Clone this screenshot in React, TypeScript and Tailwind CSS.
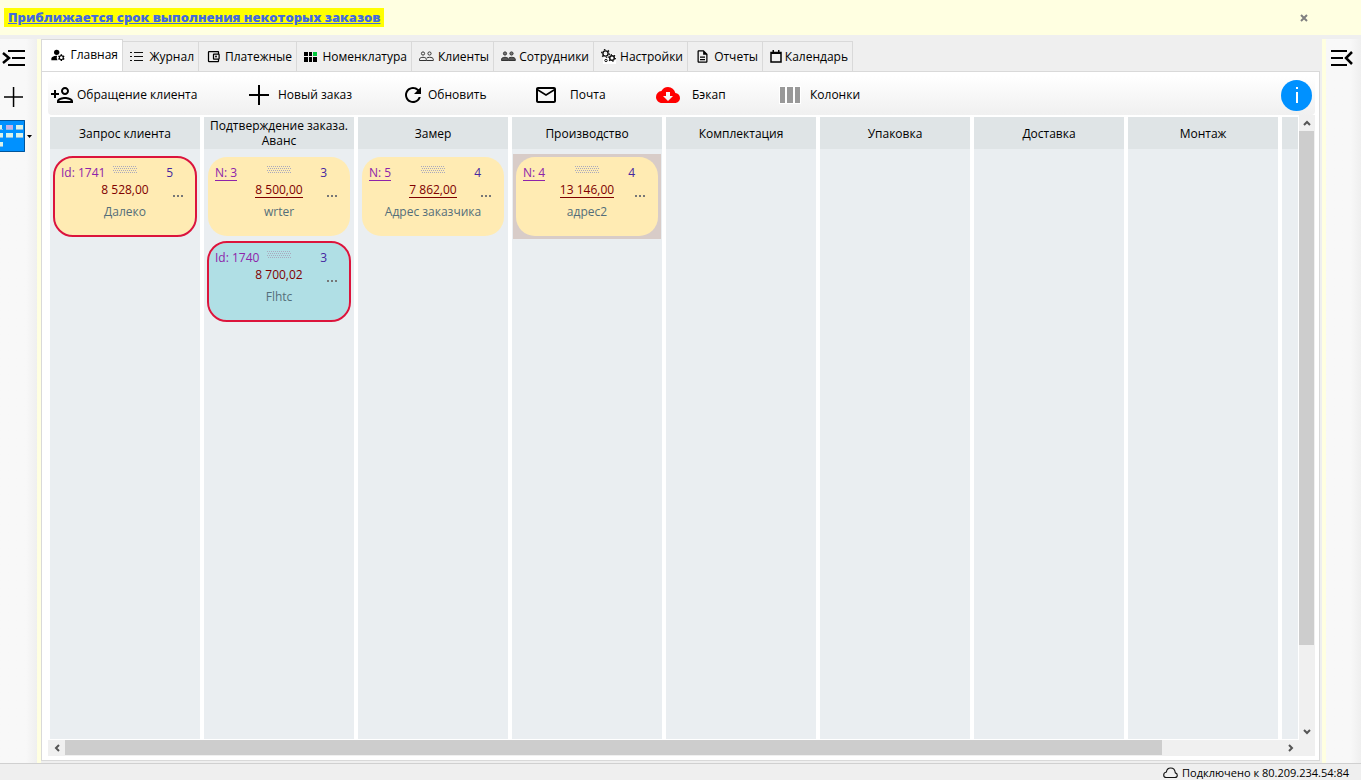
import React, { useState } from "react";
import {
  MdManageAccounts,
  MdOutlineAccountBalanceWallet,
  MdOutlineDescription,
  MdOutlineEmail,
  MdOutlinePersonAdd,
  MdRefresh,
  MdCloudDownload,
} from "react-icons/md";

function ListIcon() {
  return (
    <svg width="13" height="12" viewBox="0 0 13 12" shapeRendering="crispEdges" aria-hidden="true">
      <path d="M0 1h2v1H0zM4 1h9v1H4zM0 5h2v1H0zM4 5h9v1H4zM0 9h2v1H0zM4 9h9v1H4z" fill="#111" />
    </svg>
  );
}

function TilesIcon() {
  return (
    <svg width="13" height="12" viewBox="0 0 13 12" shapeRendering="crispEdges" aria-hidden="true">
      <path d="M0 1h4v4H0zM5 1h3v4H5zM0 6h4v5H0zM5 6h3v5H5zM9 6h4v5H9z" fill="#000" />
      <path d="M9 1h4v4H9z" fill="#00c83c" />
    </svg>
  );
}

function PeopleIcon({ filled = false }: { filled?: boolean }) {
  return (
    <svg width="15" height="11" viewBox="0 0 15 11" fill="none" stroke="#333" aria-hidden="true">
      <circle cx="4" cy="2.5" r="1.6" fill={filled ? "#777" : "none"} />
      <circle cx="10.5" cy="2.5" r="1.6" fill={filled ? "#777" : "none"} />
      <path
        d="M.5 9.5V8.2C.5 7 2.300 6.300 4 6.300s3.300.7 3.300 1.900v1.300zM7.300 9.500h7V8.200c0-1.200-1.800-1.900-3.700-1.900-1.200 0-2.300.3-2.900.8"
        fill={filled ? "#555" : "none"}
      />
    </svg>
  );
}

function GearsIcon() {
  return (
    <svg width="15" height="15" viewBox="0 0 15 15" fill="none" stroke="#111" aria-hidden="true">
      <path d="M2 5h13v10H2z" fill="#fff" stroke="none" />
      <circle cx="4.500" cy="4.500" r="2.600" strokeWidth="1.400" />
      <circle cx="4.500" cy="4.500" r="3.900" strokeWidth="1.300" strokeDasharray="1.500 2.580" />
      <circle cx="11" cy="9" r="2.300" strokeWidth="1.500" />
      <circle cx="11" cy="9" r="3.400" strokeWidth="1.200" strokeDasharray="1.300 2.260" />
      <circle cx="5" cy="11.500" r="1.200" />
    </svg>
  );
}

function CalendarIcon() {
  return (
    <svg width="12" height="13" viewBox="0 0 12 13" aria-hidden="true">
      <path d="M1 2.500h10v9.500H1z" fill="none" stroke="#000" strokeWidth="1.500" />
      <path d="M1 2h10v2H1zM2.500 0H4v2H2.500zM8 0h1.500v2H8z" />
    </svg>
  );
}

function PlusIcon() {
  return (
    <svg width="20" height="20" viewBox="0 0 20 20" shapeRendering="crispEdges" aria-hidden="true">
      <path d="M9 0h2v20H9zM0 9h20v2H0z" fill="#000" />
    </svg>
  );
}

function ThinPlusIcon() {
  return (
    <svg width="19" height="20" viewBox="0 0 19 20" aria-hidden="true">
      <path d="M8.800 0h1.500v20H8.800zM0 9.200h19v1.600H0z" fill="#000" />
    </svg>
  );
}

function CloudIcon() {
  return (
    <svg width="15" height="12" viewBox="0 0 15 12" fill="none" stroke="#111" strokeWidth="1.100" aria-hidden="true">
      <path d="M3.200 10.500h8.600c1.400 0 2.500-1 2.500-2.300 0-1-.8-2-2-2.300C12 3 10.200 1 7.700 1 5.300 1 3.700 2.700 3.400 5 1.700 5.300.7 6.500.7 7.900c0 1.500 1.100 2.600 2.500 2.600z" />
    </svg>
  );
}

function ColumnsIcon() {
  return (
    <svg width="22" height="18" viewBox="0 0 22 18" shapeRendering="crispEdges" aria-hidden="true">
      <path d="M0 0h22v18H0z" fill="#fff" />
      <path d="M1 1h5v16H1zM8 1h6v16H8zM16 1h5v16H16z" fill="#999" />
    </svg>
  );
}

function ExpandIcon({ flipped = false }: { flipped?: boolean }) {
  return (
    <svg width="24" height="18" viewBox="0 0 24 18" fill="none" stroke="#000" strokeWidth="2" aria-hidden="true">
      {flipped ? (
        <>
          <path d="M1 2h16M1 9h12M1 16h16" />
          <path d="M22 3l-6 6 6 6" strokeWidth="2.500" />
        </>
      ) : (
        <>
          <path d="M7 2h17M11 9h13M7 16h17" />
          <path d="M2 4l6 5-6 5" strokeWidth="2.500" />
        </>
      )}
    </svg>
  );
}

function BoardIcon() {
  return (
    <svg width="25" height="32" viewBox="0 0 25 32" aria-hidden="true">
      <path d="M0 0h25v32H0z" fill="#0091ff" />
      <path d="M0 .5h24.500v31H0" fill="none" stroke="#00559b" />
      <path d="M0 5h2v5H0zM16 5h7v5h-7zM0 13h3v5H0zM6 13h7v5H6zM16 13h7v5h-7zM0 22h3v5H0z" fill="#d9f2ea" />
      <path d="M6 5h7v5H6z" fill="#c3b3e6" />
      <path d="M0 9h3v1H0zM6 9h7v1H6zM16 9h7v1h-7zM0 17h3v1H0zM6 17h7v1H6zM16 17h7v1h-7zM0 26h3v1H0z" fill="#86bdea" />
    </svg>
  );
}

function GripIcon() {
  const dots: React.ReactNode[] = [];
  for (let row = 0; row < 4; row++) {
    for (let col = 0; col < 12; col++) {
      dots.push(<rect key={`${row}-${col}`} x={col * 2 + (row % 2)} y={row * 2} width="1" height="1" />);
    }
  }
  return (
    <svg width="24" height="8" viewBox="0 0 24 8" fill="#a9a9bd" shapeRendering="crispEdges" aria-hidden="true">
      {dots}
    </svg>
  );
}

function Chevron({ direction }: { direction: "up" | "down" | "left" | "right" }) {
  const paths = {
    up: "M1 6l3-3 3 3",
    down: "M1 2l3 3 3-3",
    left: "M6 1L3 4l3 3",
    right: "M2 1l3 3-3 3",
  };
  return (
    <svg width="8" height="8" viewBox="0 0 8 8" fill="none" stroke="#555" strokeWidth="2" aria-hidden="true">
      <path d={paths[direction]} />
    </svg>
  );
}

const tabs = [
  { label: "Главная", width: "w-[82px]", icon: <MdManageAccounts size={16} /> },
  { label: "Журнал", width: "w-[76px]", icon: <ListIcon /> },
  { label: "Платежные", width: "w-[98px]", icon: <MdOutlineAccountBalanceWallet size={15} /> },
  { label: "Номенклатура", width: "w-[115px]", icon: <TilesIcon /> },
  { label: "Клиенты", width: "w-[82px]", icon: <PeopleIcon /> },
  { label: "Сотрудники", width: "w-[100px]", icon: <PeopleIcon filled /> },
  { label: "Настройки", width: "w-[94px]", icon: <GearsIcon /> },
  { label: "Отчеты", width: "w-[75px]", icon: <MdOutlineDescription size={15} /> },
  { label: "Календарь", width: "w-[90px]", icon: <CalendarIcon /> },
];

const actions = [
  { label: "Обращение клиента", width: "w-[199px]", gap: "gap-[3px]", icon: <MdOutlinePersonAdd size={24} /> },
  { label: "Новый заказ", width: "w-[152px]", gap: "gap-[9px]", icon: <PlusIcon /> },
  { label: "Обновить", width: "w-[133px]", gap: "gap-[3px]", icon: <MdRefresh size={24} /> },
  { label: "Почта", width: "w-[122px]", gap: "gap-3", icon: <MdOutlineEmail size={24} /> },
  { label: "Бэкап", width: "w-[123px]", gap: "gap-3", icon: <MdCloudDownload size={24} color="#f00" /> },
  { label: "Колонки", width: "w-[90px]", gap: "gap-[9px]", icon: <ColumnsIcon /> },
];

type Order = {
  id: string;
  count: number;
  amount: string;
  address: string;
  linked?: boolean;
  outlined?: boolean;
  blue?: boolean;
  selected?: boolean;
};

const columns: { title: string; orders: Order[] }[] = [
  { title: "Запрос клиента", orders: [{ id: "Id: 1741", count: 5, amount: "8 528,00", address: "Далеко", outlined: true }] },
  {
    title: "Подтверждение заказа. Аванс",
    orders: [
      { id: "N: 3", count: 3, amount: "8 500,00", address: "wrter", linked: true },
      { id: "Id: 1740", count: 3, amount: "8 700,02", address: "Flhtc", outlined: true, blue: true },
    ],
  },
  { title: "Замер", orders: [{ id: "N: 5", count: 4, amount: "7 862,00", address: "Адрес заказчика", linked: true }] },
  {
    title: "Производство",
    orders: [{ id: "N: 4", count: 4, amount: "13 146,00", address: "адрес2", linked: true, selected: true }],
  },
  { title: "Комплектация", orders: [] },
  { title: "Упаковка", orders: [] },
  { title: "Доставка", orders: [] },
  { title: "Монтаж", orders: [] },
  { title: "", orders: [] },
];

function OrderCard({ order }: { order: Order }) {
  const frame = order.outlined ? "border-2 border-[#dc143c] px-1.5 pt-1.5" : "border border-transparent px-[7px] pt-[7px]";
  const fill = order.blue ? "bg-[#b0dfe5]" : "bg-[#ffebb3]";
  return (
    <li className={`h-[85px] p-0.5 ${order.selected ? "bg-[#d8ccc8]" : ""}`}>
      <article className={`h-full rounded-[20px] bg-clip-padding ${frame} ${fill}`}>
        <div className="grid h-[17px] grid-cols-[1fr_24px_1fr] items-center">
          {order.linked ? (
            <a href="#order" className="justify-self-start border-b border-[#8e24aa] leading-[15px] text-[#8e24aa]">
              {order.id}
            </a>
          ) : (
            <span className="whitespace-nowrap text-[#8e24aa]">{order.id}</span>
          )}
          <span className="pb-1.5">
            <GripIcon />
          </span>
          <span className="pr-4 text-right text-[#4527a0]">{order.count}</span>
        </div>
        <div className="grid h-[17px] grid-cols-[1fr_auto_1fr] items-center">
          <span />
          {order.linked ? (
            <a href="#amount" className="border-b border-[#800000] leading-[15px] text-[#800000]">
              {order.amount}
            </a>
          ) : (
            <span className="text-[#800000]">{order.amount}</span>
          )}
          <button type="button" aria-label="Действия" className="flex gap-0.5 justify-self-end pt-3 pr-1.5">
            <span className="size-0.5 bg-[#777]" />
            <span className="size-0.5 bg-[#777]" />
            <span className="size-0.5 bg-[#777]" />
          </button>
        </div>
        <p className="pt-1.5 text-center text-[#546e7a]">{order.address}</p>
      </article>
    </li>
  );
}

export default function App() {
  const [active, setActive] = useState(0);
  return (
    <div className="flex h-screen flex-col overflow-hidden bg-[#efefef] font-['Open_Sans','Noto_Sans',sans-serif] text-xs text-black">
      <header className="flex h-[35px] shrink-0 items-center justify-between bg-[#ffffe1] pr-[52px] pl-1">
        <a href="#deadlines" className="bg-[#ff0] px-1 text-[13px] leading-[19px] font-extrabold text-[#4169e1] underline">
          Приближается срок выполнения некоторых заказов
        </a>
        <button type="button" aria-label="Закрыть" className="p-px">
          <svg width="8" height="8" viewBox="0 0 8 8" stroke="#808080" strokeWidth="2" aria-hidden="true">
            <path d="M1 1l6 6M7 1L1 7" />
          </svg>
        </button>
      </header>

      <div className="flex min-h-0 flex-1 pt-1">
        <aside className="flex w-[37px] shrink-0 flex-col bg-linear-to-r from-[#f8f8f8] from-70% to-[#efefef] pt-2.5">
          <button type="button" aria-label="Развернуть меню" className="flex pl-px">
            <ExpandIcon />
          </button>
          <button type="button" aria-label="Добавить" className="mt-5 flex pl-1">
            <ThinPlusIcon />
          </button>
          <button type="button" aria-label="Доска" className="mt-[13px] flex items-center gap-0.5">
            <BoardIcon />
            <svg width="5" height="3" viewBox="0 0 5 3" aria-hidden="true">
              <path d="M0 0h5L2.500 3z" />
            </svg>
          </button>
        </aside>
        <div className="w-1 shrink-0 bg-[#ffffe1]" />

        <main className="flex min-w-0 flex-1 flex-col pb-0.5">
          <div role="tablist" className="flex h-8 shrink-0 items-end">
            {tabs.map((tab, i) => (
              <button
                key={tab.label}
                type="button"
                role="tab"
                aria-selected={i === active}
                onClick={() => setActive(i)}
                className={`flex shrink-0 items-center justify-between border-t border-r border-[#d9d9d9] pr-1 whitespace-nowrap ${tab.width} ${
                  i === active ? "h-8 border-l bg-white pb-0.5 pl-2" : "h-[30px] pl-[7px]"
                }`}
              >
                {tab.icon}
                {tab.label}
              </button>
            ))}
          </div>

          <section className="flex min-h-0 flex-1 flex-col border border-[#d9d9d9] bg-white pt-1 pr-1 pb-1 pl-1.5">
            <div className="flex h-[39px] shrink-0 items-center rounded bg-linear-to-b from-white to-[#f0f0f0] pr-[3px] pb-px pl-0.5">
              {actions.map((action) => (
                <button key={action.label} type="button" className={`flex shrink-0 items-center whitespace-nowrap ${action.width} ${action.gap}`}>
                  {action.icon}
                  {action.label}
                </button>
              ))}
              <button
                type="button"
                aria-label="Информация"
                className="ml-auto flex size-[31px] shrink-0 items-center justify-center rounded-full bg-[#0091ff]"
              >
                <svg width="2" height="16" viewBox="0 0 2 16" fill="#fff" aria-hidden="true">
                  <path d="M0 0h2v2H0zM0 5h2v11H0z" />
                </svg>
              </button>
            </div>

            <div className="flex min-h-0 flex-1">
              <div className="flex min-w-0 flex-1 gap-1 overflow-hidden pt-0.5 pr-px pb-px pl-0.5">
                {columns.map((column, i) => (
                  <section key={i} className={`flex flex-col bg-[#eaeef1] ${i === 8 ? "min-w-0 flex-1" : "w-[150px] shrink-0"}`}>
                    <h2 className="flex h-8 shrink-0 items-center justify-center bg-[#dfe4e6] px-1 text-center leading-[15px]">
                      {column.title}
                    </h2>
                    <ul className="px-px pt-[5px]">
                      {column.orders.map((order) => (
                        <OrderCard key={order.id} order={order} />
                      ))}
                    </ul>
                  </section>
                ))}
              </div>
              <div className="flex w-4 shrink-0 flex-col bg-[#f0f0f0]">
                <button type="button" aria-label="Вверх" className="flex h-4 items-center justify-center">
                  <Chevron direction="up" />
                </button>
                <div className="flex min-h-0 flex-1 flex-col">
                  <div className="w-[15px] flex-[514] bg-[#cdcdcd]" />
                  <div className="flex-[79]" />
                </div>
                <button type="button" aria-label="Вниз" className="flex h-4 items-center justify-center">
                  <Chevron direction="down" />
                </button>
              </div>
            </div>
            <div className="flex h-4 shrink-0 bg-[#f0f0f0] pr-4">
              <button type="button" aria-label="Влево" className="flex w-[17px] items-center justify-center">
                <Chevron direction="left" />
              </button>
              <div className="h-[15px] flex-[1097] bg-[#cdcdcd]" />
              <div className="flex-[120]" />
              <button type="button" aria-label="Вправо" className="flex w-[17px] items-center justify-center">
                <Chevron direction="right" />
              </button>
            </div>
          </section>
        </main>

        <div className="ml-0.5 w-1 shrink-0 bg-[#ffffe1]" />
        <aside className="w-[35px] shrink-0 bg-linear-to-r from-[#f8f8f8] from-70% to-[#efefef] pt-2.5">
          <button type="button" aria-label="Свернуть панель" className="flex pl-1">
            <ExpandIcon flipped />
          </button>
        </aside>
      </div>

      <footer className="flex h-[17px] shrink-0 items-center justify-end gap-1 border-t border-[#d0d0d0] pt-0.5 pr-3 text-[11px] leading-[14px]">
        <CloudIcon />
        Подключено к 80.209.234.54:84
      </footer>
    </div>
  );
}
